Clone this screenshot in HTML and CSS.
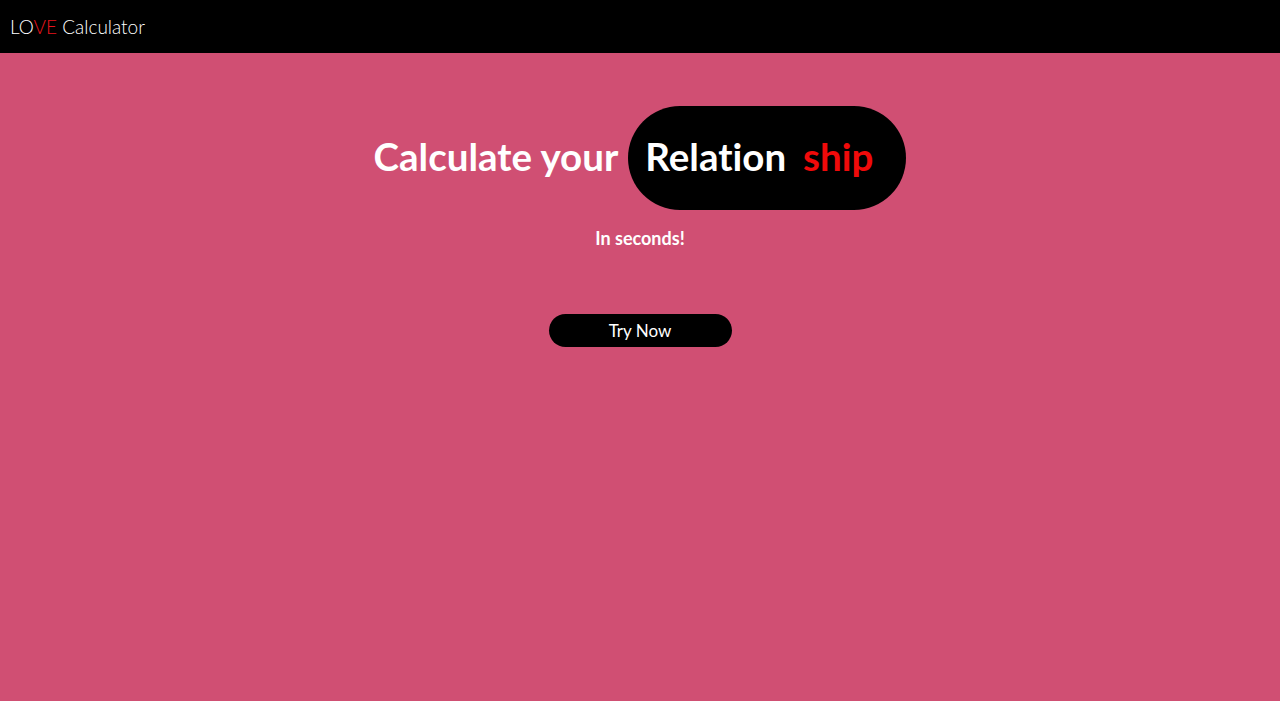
FILE: index.html
```html
<!DOCTYPE html>
<html>
<head>
<meta charset="utf-8">
<link rel="stylesheet" href="styles.css">
</head>
<body>
<nav class="navbar"><span class="brand"><span class="lo">LO</span><span class="ve">VE</span> Calculator</span></nav>
<main class="hero">
  <h1 class="headline"><span class="lead">Calculate your</span><span class="pill"><span class="rel">Relation</span><span class="ship">ship</span></span></h1>
  <p class="sub">In seconds!</p>
  <button class="try">Try Now</button>
</main>
</body>
</html>
```
FILE: styles.css
```css
html, body { margin: 0; padding: 0; background: #fff; }
body { font-family: "Lato", "Open Sans", sans-serif; font-variant-ligatures: none; }
.navbar { height: 53px; background: #000; display: flex; align-items: center; padding-left: 10px; }
.brand { color: #fff; font-size: 19px; font-weight: 300; }
.ve { color: #e8141b; }
.hero { height: 648px; background: #d04f73; display: flex; flex-direction: column; align-items: center; }
.headline { margin: 53px 0 0; display: flex; align-items: center; gap: 10px; font-size: 38.5px; font-weight: 700; color: #fff; }
.lead { padding-bottom: 5px; }
.pill { box-sizing: border-box; background: #000; height: 104px; border-radius: 52px; display: flex; align-items: center; padding: 0 33px 5px 17px; gap: 17px; }
.ship { color: #f00a0a; }
.sub { margin: 17px 0 0; color: #fff; font-size: 18px; font-weight: 700; }
.try { margin-top: 65px; width: 183px; height: 33px; border: 0; border-radius: 17px; background: #000; color: #fff; font-family: inherit; font-size: 17px; }
```
